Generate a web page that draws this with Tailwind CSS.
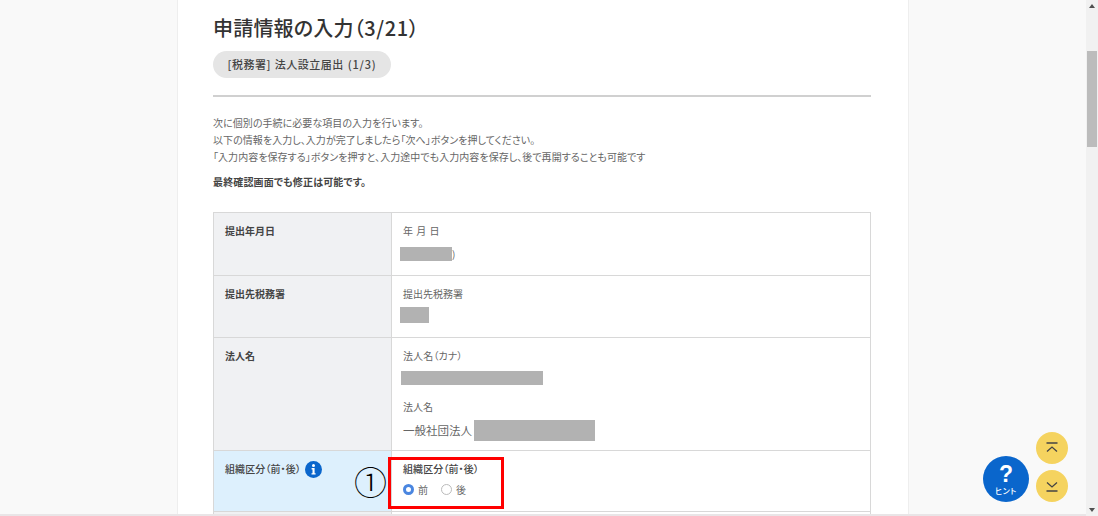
<!DOCTYPE html>
<html lang="ja">
<head>
  <meta charset="UTF-8" />
  <title>申請情報の入力</title>
  <script src="https://cdn.jsdelivr.net/npm/@tailwindcss/browser@4"></script>
</head>
<body class="h-[516px] w-[1098px] overflow-hidden bg-[#f9f9f9] font-['Noto_Sans_CJK_JP','Noto_Sans',sans-serif] text-[#666] [font-feature-settings:'palt']">
  <div class="relative flex h-[516px]">
    <!-- page -->
    <div class="h-[514px] w-[1086px] overflow-hidden">
      <main class="ml-[177px] h-[514px] w-[732px] border-x border-[#eeeeee] bg-white pl-[35px] pr-[37px]">
        <h1 class="pt-[13px] text-[20px] font-medium leading-[29px] tracking-[0.2px] text-[#333]">申請情報の入力<span class="tracking-[0.6px]">（3/21）</span></h1>
        <div class="mt-[9px] flex h-[27px] w-[178px] items-center justify-center gap-[4px] rounded-full bg-[#e5e5e5] text-[11px] font-medium tracking-[0.5px] text-[#444]"><span>[税務署]</span><span>法人設立届出</span><span class="tracking-[0.8px]">(1/3)</span></div>
        <hr class="mt-[17px] border-t-2 border-[#d0d0d0]" />

        <div class="mt-[17px] text-[10px] leading-[17px] tracking-[0.05px] text-[#666]">
          <p>次に個別の手続に必要な項目の入力を行います。</p>
          <p>以下の情報を入力し、入力が完了しましたら「次へ」ボタンを押してください。</p>
          <p>「入力内容を保存する」ボタンを押すと、入力途中でも入力内容を保存し、後で再開することも可能です</p>
          <p class="mt-[8px] font-bold tracking-[0.15px] text-[#444]">最終確認画面でも修正は可能です。</p>
        </div>

        <!-- form table -->
        <div class="mt-[22px] border border-b-0 border-[#d8d8d8] text-[10px]">
          <div class="flex h-[63px] border-b border-[#d8d8d8]">
            <div class="w-[178px] border-r border-[#d8d8d8] bg-[#f0f1f3] pl-[11px] pt-[9px] font-bold leading-[17px] text-[#444]">提出年月日</div>
            <div class="pl-[11px] pt-[9px] leading-[17px]">
              <p class="tracking-[0.5px]">年 月 日</p>
              <div class="-ml-[3px] mt-[8px] flex items-center">
                <div class="h-[14px] w-[52px] bg-[#b2b2b2]"></div>
                <span class="text-[10px] leading-[14px]">)</span>
              </div>
            </div>
          </div>
          <div class="flex h-[62px] border-b border-[#d8d8d8]">
            <div class="w-[178px] border-r border-[#d8d8d8] bg-[#f0f1f3] pl-[11px] pt-[9px] font-bold leading-[17px] text-[#444]">提出先税務署</div>
            <div class="pl-[11px] pt-[9px] leading-[17px]">
              <p>提出先税務署</p>
              <div class="-ml-[3px] mt-[5px] h-[16px] w-[29px] bg-[#b2b2b2]"></div>
            </div>
          </div>
          <div class="flex h-[113px] border-b border-[#d8d8d8]">
            <div class="w-[178px] border-r border-[#d8d8d8] bg-[#f0f1f3] pl-[11px] pt-[9px] font-bold leading-[17px] text-[#444]">法人名</div>
            <div class="pl-[11px] pt-[9px] leading-[17px]">
              <p class="tracking-[0.1px]">法人名（カナ）</p>
              <div class="-ml-[2px] mt-[7px] h-[14px] w-[142px] bg-[#b2b2b2]"></div>
              <p class="mt-[13px]">法人名</p>
              <div class="mt-[5px] flex items-center">
                <span class="w-[71px] shrink-0 whitespace-nowrap text-[11.5px]">一般社団法人</span>
                <div class="h-[21px] w-[121px] bg-[#b2b2b2]"></div>
              </div>
            </div>
          </div>
          <div class="flex h-[61px] border-b border-[#d8d8d8]">
            <div class="flex w-[178px] items-start gap-[4px] border-r border-[#d8d8d8] bg-[#ddf0fd] pl-[11px] pt-[9px] font-medium leading-[17px] tracking-[0.1px] text-[#444]">
              <span>組織区分（前・後）</span>
              <svg class="mt-[1px] h-[17px] w-[17px]" viewBox="0 0 17 17"><circle cx="8.5" cy="8.5" r="8.5" fill="#0a66cc"/><circle cx="8.5" cy="4.6" r="1.5" fill="#fff"/><path d="M6.6 7h3v5.2h1v1.4H6.5v-1.4h1V8.4h-.9z" fill="#fff"/></svg>
            </div>
            <div class="pl-[11px] pt-[9px] leading-[17px]">
              <p class="font-medium tracking-[0.1px] text-[#444]">組織区分（前・後）</p>
              <div class="mt-[4px] flex items-center">
                <span class="h-[11px] w-[11px] rounded-full border-[3px] border-[#4a86e0] bg-white"></span>
                <span class="ml-[4px]">前</span>
                <span class="ml-[13px] h-[11px] w-[11px] rounded-full border border-[#bbb] bg-white"></span>
                <span class="ml-[4px]">後</span>
              </div>
            </div>
          </div>
          <div class="flex h-[10px]">
            <div class="w-[178px] border-r border-[#d8d8d8] bg-[#f0f1f3]"></div>
          </div>
        </div>
      </main>
    </div>

    <!-- vertical scrollbar -->
    <div class="relative h-[516px] w-[12px] bg-[#f1f1f1]">
      <div class="absolute left-[3px] top-[4px] h-0 w-0 border-x-[3px] border-b-[4px] border-x-transparent border-b-[#505050]"></div>
      <div class="absolute left-[1px] top-[51px] h-[96px] w-[10px] bg-[#bcbcbc]"></div>
      <div class="absolute bottom-[4px] left-[3px] h-0 w-0 border-x-[3px] border-t-[4px] border-x-transparent border-t-[#505050]"></div>
    </div>

    <!-- annotation -->
    <span class="absolute left-[354px] top-[461px] text-[33px] font-light leading-[40px] text-black">①</span>
    <div class="absolute left-[388px] top-[457px] h-[52px] w-[116px] border-[3px] border-[#ff0000]"></div>

    <!-- floating buttons -->
    <button class="absolute left-[983px] top-[456px] flex h-[46px] w-[46px] flex-col items-center justify-center rounded-full bg-[#0a66cc] text-white">
      <span class="font-['Liberation_Sans'] text-[23px] font-bold leading-[20px]">?</span>
      <span class="mt-[2px] text-[8px] font-medium leading-[9px] tracking-[0.5px]">ヒント</span>
    </button>
    <button class="absolute left-[1036px] top-[432px] flex h-[32px] w-[32px] items-center justify-center rounded-full bg-[#f5d35f]">
      <svg class="h-[14px] w-[14px]" viewBox="0 0 14 14" fill="none" stroke="#444" stroke-width="1.3"><path d="M1.5 2h11M2 10.5l5-4.5 5 4.5"/></svg>
    </button>
    <button class="absolute left-[1036px] top-[470px] flex h-[32px] w-[32px] items-center justify-center rounded-full bg-[#f5d35f]">
      <svg class="h-[14px] w-[14px]" viewBox="0 0 14 14" fill="none" stroke="#444" stroke-width="1.3"><path d="M2 3.5l5 4.5 5-4.5M1.5 12h11"/></svg>
    </button>

    <!-- horizontal scrollbar -->
    <div class="absolute bottom-0 left-0 h-[2px] w-[1086px] bg-[#e9e5e7]"></div>
  </div>
</body>
</html>
